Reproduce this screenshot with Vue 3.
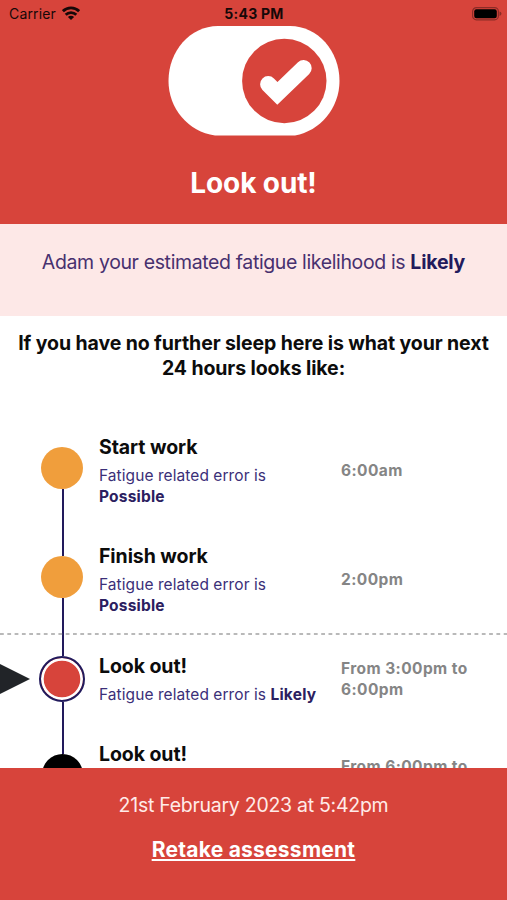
<script setup>
const rows = [
  { title: 'Start work', level: 'Possible', time: '6:00am', kind: 'amber' },
  { title: 'Finish work', level: 'Possible', time: '2:00pm', kind: 'amber' },
  { title: 'Look out!', level: 'Likely', time: 'From 3:00pm to 6:00pm', kind: 'current' },
  { title: 'Look out!', time: 'From 6:00pm to', kind: 'black' },
]
</script>

<template>
  <div class="screen">
    <header class="hero">
      <div class="status">
        <div class="carrier">
          <span>Carrier</span>
          <svg width="18" height="14" viewBox="0 0 18 14">
            <g fill="none" stroke="#160808" stroke-width="2.8">
              <path d="M0.9 5.2a11.6 11.6 0 0 1 16.2 0" />
              <path d="M3.7 8.7a7.6 7.6 0 0 1 10.6 0" />
            </g>
            <path d="M9 14L5.9 11a4.4 4.4 0 0 1 6.2 0z" fill="#160808" />
          </svg>
        </div>
        <span class="clock">5:43 PM</span>
        <svg class="battery" width="30" height="14" viewBox="0 0 30 14">
          <rect x="0.6" y="0.6" width="25.8" height="12.2" rx="3.8" fill="none" stroke="#8c2c27" stroke-width="1.2" />
          <rect x="2.2" y="2.2" width="22.6" height="9" rx="2.2" fill="#000" />
          <path d="M27.5 4.6q2 .6 2 2.2t-2 2.2z" fill="#8c2c27" />
        </svg>
      </div>
      <svg class="toggle" width="172" height="110" viewBox="0 0 172 110">
        <path d="M50 0H122C150 0 171.5 25 171.5 55C171.5 82 152 105 127 109.5H47C20 106 0.5 82 0.5 55C0.5 25 22 0 50 0Z" fill="#fff" />
        <circle cx="116.3" cy="55" r="42.2" fill="#d7443b" />
        <path d="M100.2 58.2L109.4 67.4L135.6 42.2" fill="none" stroke="#fff" stroke-width="16.2" stroke-linecap="round" />
      </svg>
      <h1>Look out!</h1>
    </header>
    <section class="band"><p>Adam your estimated fatigue likelihood is <b>Likely</b></p></section>
    <main>
      <h2>If you have no further sleep here is what your next<br>24 hours looks like:</h2>
      <ul class="timeline">
        <li v-for="(r, i) in rows" :key="i" :class="['row', r.kind]">
          <div class="rail">
            <i class="line up"></i>
            <i class="dot"></i>
            <i class="line down"></i>
          </div>
          <div class="info">
            <h3>{{ r.title }}</h3>
            <p v-if="r.level">Fatigue related error is <b>{{ r.level }}</b></p>
          </div>
          <div class="time">{{ r.time }}</div>
          <svg v-if="r.kind === 'current'" class="pointer" width="31" height="32" viewBox="0 0 31 32">
            <path d="M0 1L30 16L0 31Z" fill="#212428" />
          </svg>
          <svg v-if="r.kind === 'current'" class="divider" width="507" height="2" viewBox="0 0 507 2">
            <path d="M0 1H507" stroke="#a3a3a3" stroke-width="1.6" stroke-dasharray="3.8 3.5" />
          </svg>
        </li>
      </ul>
    </main>
    <footer>
      <p>21st February 2023 at 5:42pm</p>
      <a>Retake assessment</a>
    </footer>
  </div>
</template>

<style>
body { margin: 0; overflow: hidden; }
</style>

<style scoped>
.screen { width: 507px; height: 900px; display: flex; flex-direction: column; overflow: hidden; background: #fff; font-family: Inter, "Liberation Sans", sans-serif; }
h1, h2, h3, p, ul { margin: 0; padding: 0; }
.hero { height: 224px; flex: none; background: #d7443b; display: flex; flex-direction: column; align-items: center; }
.status { width: 100%; height: 25px; box-sizing: border-box; padding: 3px 5px 0 9px; display: grid; grid-template-columns: 1fr auto 1fr; align-items: center; font-size: 14px; line-height: 22px; color: #160808; }
.carrier { display: flex; align-items: center; gap: 6px; letter-spacing: 0.15px; }
.carrier svg { margin-top: -3px; }
.clock { font-weight: 700; letter-spacing: 0.25px; margin-right: 3px; }
.battery { justify-self: end; margin-top: -1px; }
.toggle { display: block; margin-top: 1px; }
h1 { margin-top: 27px; color: #fff; font-size: 28px; line-height: 40px; font-weight: 700; letter-spacing: -0.1px; }
.band { height: 92px; flex: none; background: #fde8e7; text-align: center; color: #47306f; font-size: 19.5px; line-height: 26px; letter-spacing: -0.37px; }
.band p { padding-top: 25px; white-space: nowrap; }
.band b { color: #221a5c; font-weight: 700; letter-spacing: -0.2px; }
main { height: 452px; flex: none; overflow: hidden; }
h2 { padding-top: 15px; height: 86px; text-align: center; font-size: 19.5px; line-height: 25px; font-weight: 700; letter-spacing: -0.1px; color: #0c0c0c; white-space: nowrap; }
.timeline { list-style: none; }
.row { position: relative; height: 109px; display: grid; grid-template-columns: 99px 242px 1fr; align-items: center; }
.current { height: 88px; }
.black { height: 45px; align-items: start; }
.rail { align-self: stretch; display: flex; flex-direction: column; align-items: center; padding-left: 25px; }
.line { width: 2.5px; background: #221a5c; margin-left: 2px; flex: none; }
.up { height: 30px; }
.down { flex: 1; }
.row:first-child .up { visibility: hidden; }
.dot { flex: none; box-sizing: border-box; width: 42px; height: 42px; border-radius: 50%; background: #f09e3c; }
.current .up { height: 20.7px; }
.current .dot { width: 46.4px; height: 46.4px; border: 2.3px solid #221a5c; background: #d7443b; box-shadow: inset 0 0 0 2.7px #fff; }
.black .up { height: 31px; }
.black .dot { width: 41px; height: 41px; background: #000; }
.black .down { display: none; }
h3 { font-size: 19.5px; line-height: 26px; font-weight: 700; letter-spacing: -0.08px; color: #0c0c0c; white-space: nowrap; }
.info p { margin-top: 5.5px; font-size: 15.5px; line-height: 20.5px; letter-spacing: 0.07px; color: #3b2f78; white-space: nowrap; }
.amber .info { margin-top: -3px; }
.amber .info p { line-height: 21px; margin-top: 5px; }
.amber .info b { display: block; }
.black .info { padding-top: 18px; }
.info b { font-weight: 700; color: #2b2060; letter-spacing: 0.2px; }
.time { width: 140px; font-size: 15.5px; line-height: 21px; font-weight: 700; letter-spacing: 0.42px; color: #858585; }
.amber .time { margin-top: -2px; }
.black .time { padding-top: 33px; }
.pointer { position: absolute; left: 0; top: 28px; }
.divider { position: absolute; left: 0; top: -2px; }
footer { height: 132px; flex: none; background: #d7443b; color: #fff; display: flex; flex-direction: column; align-items: center; }
footer p { margin-top: 24px; font-size: 19.5px; line-height: 26px; letter-spacing: -0.27px; color: #ffebe8; }
footer a { margin-top: 18px; font-size: 21px; line-height: 28px; font-weight: 700; letter-spacing: 0.25px; text-decoration: underline; text-decoration-thickness: 1.5px; text-underline-offset: 2px; text-decoration-skip-ink: none; }
</style>
